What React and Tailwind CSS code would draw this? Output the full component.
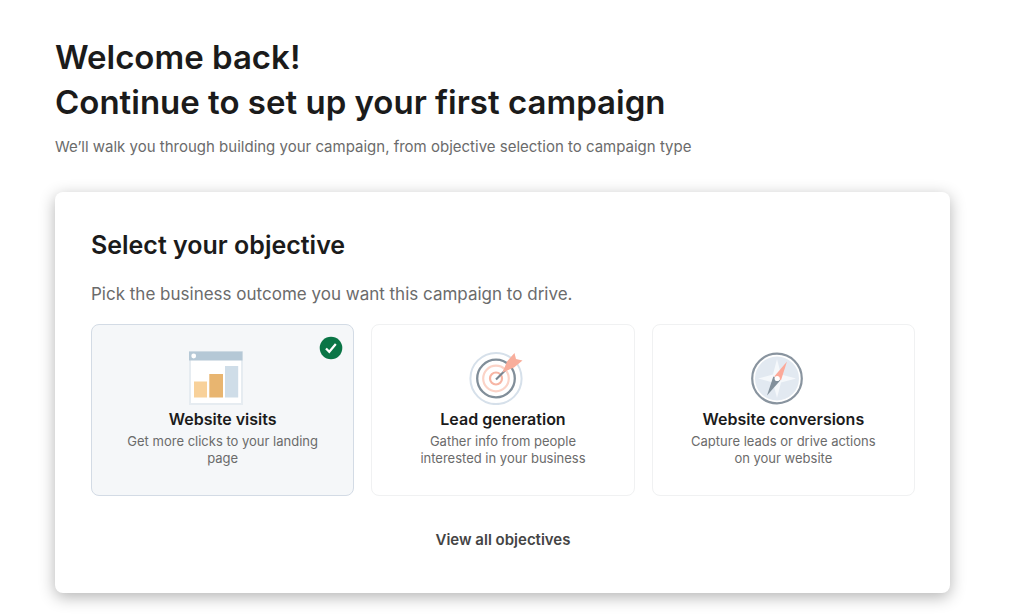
import React, { useState } from 'react';

function WebsiteVisitsIcon() {
  return (
    <svg viewBox="0 0 54 54" className="mr-[13px] w-[54px] h-[54px]" aria-hidden="true">
      <rect x="1" y="1" width="52" height="52" fill="#ffffff" stroke="#e6ecf1" strokeWidth="2" />
      <rect x="0" y="0.5" width="53.5" height="9" fill="#b5c8d6" />
      <circle cx="4.7" cy="5" r="2.4" fill="#ffffff" />
      <rect x="5" y="30.5" width="13" height="16" fill="#f8d19a" />
      <rect x="20.3" y="23" width="13.7" height="23.5" fill="#e8b570" />
      <rect x="36" y="15" width="13.2" height="31.5" fill="#cfdde8" />
    </svg>
  );
}

function LeadGenerationIcon() {
  return (
    <svg viewBox="0 0 54 54" className="mr-[13px] w-[54px] h-[54px]" aria-hidden="true">
      <g fill="none">
        <circle cx="27" cy="27.5" r="25.6" stroke="#d6e0ea" strokeWidth="2" />
        <circle cx="27" cy="27.5" r="18.8" stroke="#818e99" strokeWidth="2.3" />
        <circle cx="27" cy="27.5" r="12.8" stroke="#fbd3c7" strokeWidth="2.2" />
        <circle cx="27" cy="27.5" r="6" stroke="#f7b5a4" strokeWidth="2.2" />
      </g>
      <path d="M27 28.5L36 19.5" stroke="#788591" strokeWidth="2.2" />
      <path d="M33.5 21.5L38 10.5L45.5 2L47 8L53.5 9.5L45 16.5Z" fill="#f8ae9c" />
    </svg>
  );
}

function WebsiteConversionsIcon() {
  return (
    <svg viewBox="0 0 54 54" className="mr-[13px] w-[54px] h-[54px]" aria-hidden="true">
      <circle cx="27" cy="27.5" r="24.8" fill="#ffffff" stroke="#89949f" strokeWidth="2.2" />
      <circle cx="27" cy="27.5" r="22" fill="#e2e9f1" />
      <path d="M27 8L31 23.5L46 27.5L31 31.5L27 47L23 31.5L8 27.5L23 23.5Z" fill="#f5f8fb" />
      <path d="M37 10.5L31 29.2L24.2 25.6Z" fill="#fca999" />
      <path d="M17 44.5L23.3 25.5L30.4 29.2Z" fill="#82909b" />
      <circle cx="27.2" cy="27.5" r="2.6" fill="#ffffff" />
    </svg>
  );
}

function SelectedBadge() {
  return (
    <svg viewBox="0 0 24 24" className="absolute top-[11px] right-[10px] w-6 h-6" aria-hidden="true">
      <circle cx="12" cy="12" r="11.3" fill="#0a7546" />
      <path d="M7 12.4L10.3 15.8L16.8 8" fill="none" stroke="#ffffff" strokeWidth="2.2" />
    </svg>
  );
}

const objectives = [
  {
    id: 'website-visits',
    title: 'Website visits',
    description: 'Get more clicks to your landing page',
    Icon: WebsiteVisitsIcon,
  },
  {
    id: 'lead-generation',
    title: 'Lead generation',
    description: 'Gather info from people interested in your business',
    Icon: LeadGenerationIcon,
  },
  {
    id: 'website-conversions',
    title: 'Website conversions',
    description: 'Capture leads or drive actions on your website',
    Icon: WebsiteConversionsIcon,
  },
];

function ObjectiveCard({ objective, selected, onSelect }) {
  const { id, title, description, Icon } = objective;

  return (
    <label
      htmlFor={id}
      className={`relative flex flex-col items-center rounded-lg border px-8 pt-[26px] pb-7 text-center cursor-pointer focus-within:outline-2 focus-within:outline-[#0a7546] ${
        selected ? 'border-[#d3dbe5] bg-[#f5f7f9]' : 'border-[#f0f1f2] bg-white'
      }`}
    >
      <input
        id={id}
        type="radio"
        name="objective"
        value={id}
        checked={selected}
        onChange={() => onSelect(id)}
        className="sr-only"
      />
      {selected && <SelectedBadge />}
      <Icon />
      <span className="mt-0.5 text-[16px] leading-6 font-semibold text-[#1b1b1b]">{title}</span>
      <span className="mt-0.5 text-[13px] leading-[17px] text-[#6b6b6b]">{description}</span>
    </label>
  );
}

export default function App() {
  const [selectedId, setSelectedId] = useState('website-visits');

  return (
    <main className="bg-white pt-[35px] pb-[21px] pl-[55px] pr-[74px] font-['Inter','Liberation_Sans',sans-serif]">
      <header>
        <h1 className="text-[33px] leading-[45px] font-semibold text-[#1b1b1b]">
          Welcome back!
          <br />
          Continue to set up your first campaign
        </h1>
        <p className="mt-[10px] text-[15px] leading-6 text-[#6b6b6b]">
          We’ll walk you through building your campaign, from objective selection to campaign type
        </p>
      </header>

      <section className="mt-[33px] rounded-lg bg-white pl-9 pr-[35px] pt-9 pb-[41px] shadow-[0_4px_16px_rgba(0,0,0,0.3)]">
        <h2 className="text-[25px] leading-[34px] font-semibold text-[#1b1b1b]">Select your objective</h2>
        <p id="objective-hint" className="mt-5 text-[17px] leading-6 text-[#6b6b6b]">
          Pick the business outcome you want this campaign to drive.
        </p>

        <div role="radiogroup" aria-labelledby="objective-hint" className="mt-[18px] grid grid-cols-3 gap-[17px]">
          {objectives.map((objective) => (
            <ObjectiveCard
              key={objective.id}
              objective={objective}
              selected={objective.id === selectedId}
              onSelect={setSelectedId}
            />
          ))}
        </div>

        <div className="mt-8 flex justify-center">
          <button type="button" className="text-[15px] leading-6 font-semibold text-[#444444] cursor-pointer">
            View all objectives
          </button>
        </div>
      </section>
    </main>
  );
}
